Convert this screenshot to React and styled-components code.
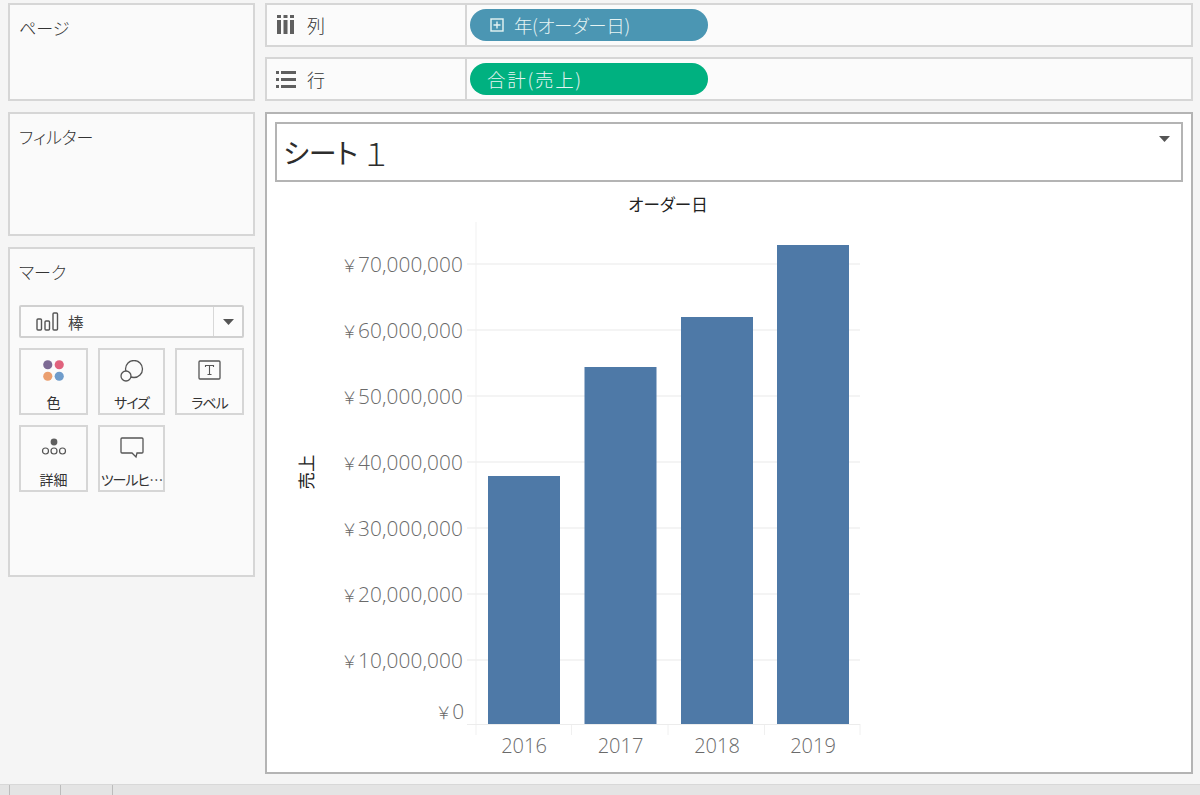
import React from 'react'
import styled, { createGlobalStyle } from 'styled-components'

const JP = `"Noto Sans CJK JP", "Open Sans", sans-serif`

const GlobalStyle = createGlobalStyle`
  html, body {
    margin: 0;
    background: #f5f5f5;
    font-family: ${JP};
    font-feature-settings: "palt";
    color: #444;
  }
  * { box-sizing: border-box; }
`

const Page = styled.div`
  width: 1200px;
  height: 795px;
  overflow: hidden;
  display: flex;
  flex-direction: column;
`

const Main = styled.div`
  height: 784px;
  padding: 3px 7px 0 8px;
  display: flex;
  gap: 10px;
`

const Sidebar = styled.div`
  width: 247px;
  display: flex;
  flex-direction: column;
  gap: 11px;
`

const Panel = styled.section`
  height: ${p => p.$h}px;
  background: #fafafa;
  border: 2px solid #d6d6d6;
  padding: 9px 9px;
`

const PanelTitle = styled.div`
  font-size: 17px;
  line-height: 28px;
  font-weight: 300;
  color: #333;
`

const MarkSelect = styled.div`
  margin-top: 19px;
  height: 33px;
  display: flex;
  align-items: center;
  background: #fcfcfc;
  border: 2px solid #d0d0d0;
  border-radius: 2px;
  font-size: 15.5px;
  color: #444;
`

const MarkName = styled.div`
  flex: 1;
  display: flex;
  align-items: center;
  gap: 9px;
  padding-left: 15px;
`

const MarkCaret = styled.div`
  width: 29px;
  height: 100%;
  border-left: 1px solid #d8d8d8;
  display: flex;
  align-items: center;
  justify-content: center;
`

const MarkGrid = styled.div`
  margin-top: 10px;
  display: grid;
  grid-template-columns: 69px 67px 69px;
  grid-auto-rows: 67px;
  gap: 10px;
`

const MarkButton = styled.div`
  background: #fbfbfb;
  border: 2px solid #d6d6d6;
  display: flex;
  flex-direction: column;
  align-items: center;
  justify-content: space-between;
  padding: 10px 0 1px;
  font-size: 14px;
  line-height: 20px;
  letter-spacing: ${p => p.$ls || 0}px;
  color: #333;
  white-space: nowrap;
  overflow: hidden;
`

const Content = styled.div`
  width: 928px;
  display: flex;
  flex-direction: column;
  gap: 10px;
`

const Shelf = styled.div`
  height: 44px;
  display: flex;
  background: #fbfbfb;
  border: 2px solid #d6d6d6;
`

const ShelfLabel = styled.div`
  width: 200px;
  display: flex;
  align-items: center;
  gap: ${p => p.$gap}px;
  padding-left: ${p => p.$pad}px;
  border-right: 2px solid #d6d6d6;
  font-size: 18px;
  font-weight: 300;
  color: #333;
`

const ShelfBody = styled.div`
  flex: 1;
  display: flex;
  align-items: center;
  padding-left: 3px;
`

const Pill = styled.div`
  width: 238px;
  height: 32px;
  border-radius: 16px;
  background: ${p => p.$color};
  color: #e6f4f3;
  display: flex;
  align-items: center;
  gap: 10px;
  padding-left: ${p => p.$pad}px;
  font-size: 18.5px;
  font-weight: 300;
  letter-spacing: ${p => p.$ls}px;
`

const Sheet = styled.div`
  height: 662px;
  margin-top: 1px;
  background: #fff;
  border: 2px solid #b4b4b4;
  display: flex;
  flex-direction: column;
`

const TitleBox = styled.div`
  position: relative;
  flex: none;
  height: 60px;
  margin: 8px 8px 0;
  border: 2px solid #b4b4b4;
  padding-left: 6px;
  display: flex;
  align-items: center;
  font-size: 28px;
  color: #2d2d2d;
`

const TitleCaret = styled.svg`
  position: absolute;
  top: 12px;
  right: 11px;
`

const ThinDigit = styled.span`
  font-size: 31px;
  font-weight: 200;
  margin-left: 6px;
`

const Chart = styled.svg`
  display: block;
`

const YenMark = styled.tspan`
  font-family: ${JP};
  font-feature-settings: normal;
  font-size: 17px;
`

const TabBar = styled.div`
  flex: 1;
  display: flex;
  background: #e4e4e4;
  border-top: 1px solid #d8d8d8;
`

const Tab = styled.div`
  width: ${p => p.$w}px;
  border-right: 1px solid #bcbcbc;
`

const ticks = [
  ['70,000,000', 264],
  ['60,000,000', 330],
  ['50,000,000', 396],
  ['40,000,000', 462],
  ['30,000,000', 528],
  ['20,000,000', 594],
  ['10,000,000', 660],
]

const bars = [
  { year: '2016', x: 488, w: 72, top: 476 },
  { year: '2017', x: 584.5, w: 72, top: 367 },
  { year: '2018', x: 681, w: 72, top: 317 },
  { year: '2019', x: 777, w: 72, top: 245 },
]

const BASE = 724
const TICK_FONT = `"Open Sans", ${JP}`
const YEN = '\uFFE5'

function BarChart() {
  return (
    <Chart width="924" height="590" viewBox="267 182 924 590">
      <line x1="476" y1="222" x2="476" y2="735" stroke="#f1f1f1" />
      {[571.5, 668, 764.5, 860].map(x => (
        <line key={x} x1={x} y1={BASE} x2={x} y2="735" stroke="#f0f0f0" />
      ))}
      {ticks.map(([label, y]) => (
        <g key={label}>
          <line x1="467" y1={y} x2="860" y2={y} stroke="#f0f0f0" strokeWidth="1.5" />
          <text x="463" y={y + 8} textAnchor="end" fontFamily={TICK_FONT} fontSize="20.8" fontWeight="300" letterSpacing="0.1" fill="#6a6a6a">
            <YenMark>{YEN}</YenMark>
            <tspan>{label}</tspan>
          </text>
        </g>
      ))}
      <line x1="467" y1={BASE + 0.5} x2="860" y2={BASE + 0.5} stroke="#ececec" />
      <text x="464" y="719" textAnchor="end" fontFamily={TICK_FONT} fontSize="20.8" fontWeight="300" fill="#6a6a6a">
        <YenMark>{YEN}</YenMark>
        <tspan>0</tspan>
      </text>
      {bars.map(b => (
        <g key={b.year}>
          <rect x={b.x} y={b.top} width={b.w} height={BASE - b.top} fill="#4e79a7" />
          <text x={b.x + b.w / 2} y="752.5" textAnchor="middle" fontFamily={`"Open Sans", sans-serif`} fontSize="20" fontWeight="300" fill="#6a6a6a">{b.year}</text>
        </g>
      ))}
      <text x="668" y="211" textAnchor="middle" fontFamily={JP} fontSize="16.5" fontWeight="400" fill="#222">オーダー日</text>
      <text transform="translate(313 472) rotate(-90)" textAnchor="middle" fontFamily={JP} fontSize="17.5" fontWeight="400" fill="#222">売上</text>
    </Chart>
  )
}

const ColumnsIcon = () => (
  <svg width="17" height="20" viewBox="0 0 17 20" fill="#5f5f5f">
    <rect x="0" y="0" width="4" height="3" /><rect x="0" y="5" width="4" height="14" />
    <rect x="6.5" y="0" width="4" height="3" /><rect x="6.5" y="5" width="4" height="14" />
    <rect x="13" y="0" width="4" height="3" /><rect x="13" y="5" width="4" height="14" />
  </svg>
)

const RowsIcon = () => (
  <svg width="20" height="17" viewBox="0 0 20 17" fill="#5f5f5f">
    <rect x="0" y="0" width="3" height="3" /><rect x="5" y="0" width="15" height="3" />
    <rect x="0" y="7" width="3" height="3" /><rect x="5" y="7" width="15" height="3" />
    <rect x="0" y="14" width="3" height="3" /><rect x="5" y="14" width="15" height="3" />
  </svg>
)

const ExpandIcon = () => (
  <svg width="14" height="14" viewBox="0 0 14 14" fill="none" stroke="#e6f4f3" strokeWidth="1.4">
    <rect x="1" y="1" width="12" height="12" />
    <path d="M7 3.5v7M3.5 7h7" />
  </svg>
)

const BarsIcon = () => (
  <svg width="23" height="19" viewBox="0 0 23 19" fill="none" stroke="#555" strokeWidth="1.4">
    <rect x="1" y="7" width="4.5" height="11" rx="1" />
    <rect x="9" y="9" width="4.5" height="9" rx="1" />
    <rect x="17" y="1" width="4.5" height="17" rx="1" />
  </svg>
)

const Caret = () => (
  <svg width="11" height="6" viewBox="0 0 11 6" fill="#555">
    <path d="M0 0h11L5.5 6z" />
  </svg>
)

const ColorIcon = () => (
  <svg width="21" height="21" viewBox="0 0 22 22">
    <circle cx="5" cy="5" r="4.8" fill="#7d6a94" />
    <circle cx="17" cy="5" r="4.8" fill="#e0627d" />
    <circle cx="5" cy="17" r="4.8" fill="#eb9f6f" />
    <circle cx="17" cy="17" r="4.8" fill="#6f9ccb" />
  </svg>
)

const SizeIcon = () => (
  <svg width="24" height="22" viewBox="0 0 24 22" fill="#fbfbfb" stroke="#555" strokeWidth="1.3">
    <circle cx="14" cy="9" r="8.5" />
    <circle cx="6" cy="16" r="5" />
  </svg>
)

const LabelIcon = () => (
  <svg width="23" height="20" viewBox="0 0 23 20" fill="none" stroke="#555" strokeWidth="1.3">
    <rect x="1" y="1" width="21" height="18" rx="1" />
    <path d="M7.5 7V5.5h8V7M11.5 5.5v9M9.5 14.5h4" strokeWidth="1.1" />
  </svg>
)

const DetailIcon = () => (
  <svg width="26" height="22" viewBox="0 0 26 22" fill="none" stroke="#555" strokeWidth="1.2">
    <circle cx="13" cy="5" r="3.4" fill="#5f5f5f" stroke="none" />
    <circle cx="4.5" cy="14" r="3" />
    <circle cx="13" cy="14" r="3" />
    <circle cx="21.5" cy="14" r="3" />
  </svg>
)

const TooltipIcon = () => (
  <svg width="24" height="22" viewBox="0 0 24 22" fill="none" stroke="#555" strokeWidth="1.3">
    <path d="M2 1h20a1 1 0 0 1 1 1v13a1 1 0 0 1-1 1h-5l-1 4-4-4H2a1 1 0 0 1-1-1V2a1 1 0 0 1 1-1z" />
  </svg>
)

const marks = [
  { label: '色', Icon: ColorIcon },
  { label: 'サイズ', Icon: SizeIcon, ls: -1 },
  { label: 'ラベル', Icon: LabelIcon, ls: -1 },
  { label: '詳細', Icon: DetailIcon },
  { label: 'ツールヒ…', Icon: TooltipIcon, ls: -1 },
]

export default function App() {
  return (
    <Page>
      <GlobalStyle />
      <Main>
        <Sidebar>
          <Panel $h={98}><PanelTitle>ページ</PanelTitle></Panel>
          <Panel $h={124}><PanelTitle>フィルター</PanelTitle></Panel>
          <Panel $h={330}>
            <PanelTitle>マーク</PanelTitle>
            <MarkSelect>
              <MarkName><BarsIcon />棒</MarkName>
              <MarkCaret><Caret /></MarkCaret>
            </MarkSelect>
            <MarkGrid>
              {marks.map(({ label, Icon, ls }) => (
                <MarkButton key={label} $ls={ls}>
                  <Icon />
                  <span>{label}</span>
                </MarkButton>
              ))}
            </MarkGrid>
          </Panel>
        </Sidebar>
        <Content>
          <Shelf>
            <ShelfLabel $pad={10} $gap={13}><ColumnsIcon />列</ShelfLabel>
            <ShelfBody>
              <Pill $color="#4b96b3" $pad={20} $ls={-0.4}><ExpandIcon />年(オーダー日)</Pill>
            </ShelfBody>
          </Shelf>
          <Shelf>
            <ShelfLabel $pad={9} $gap={11}><RowsIcon />行</ShelfLabel>
            <ShelfBody>
              <Pill $color="#00b180" $pad={17} $ls={1.7}>合計(売上)</Pill>
            </ShelfBody>
          </Shelf>
          <Sheet>
            <TitleBox>
              シート<ThinDigit>{'\uFF11'}</ThinDigit>
              <TitleCaret width="11" height="6" viewBox="0 0 11 6" fill="#555">
                <path d="M0 0h11L5.5 6z" />
              </TitleCaret>
            </TitleBox>
            <BarChart />
          </Sheet>
        </Content>
      </Main>
      <TabBar>
        <Tab $w={10} />
        <Tab $w={51} />
        <Tab $w={52} />
      </TabBar>
    </Page>
  )
}
